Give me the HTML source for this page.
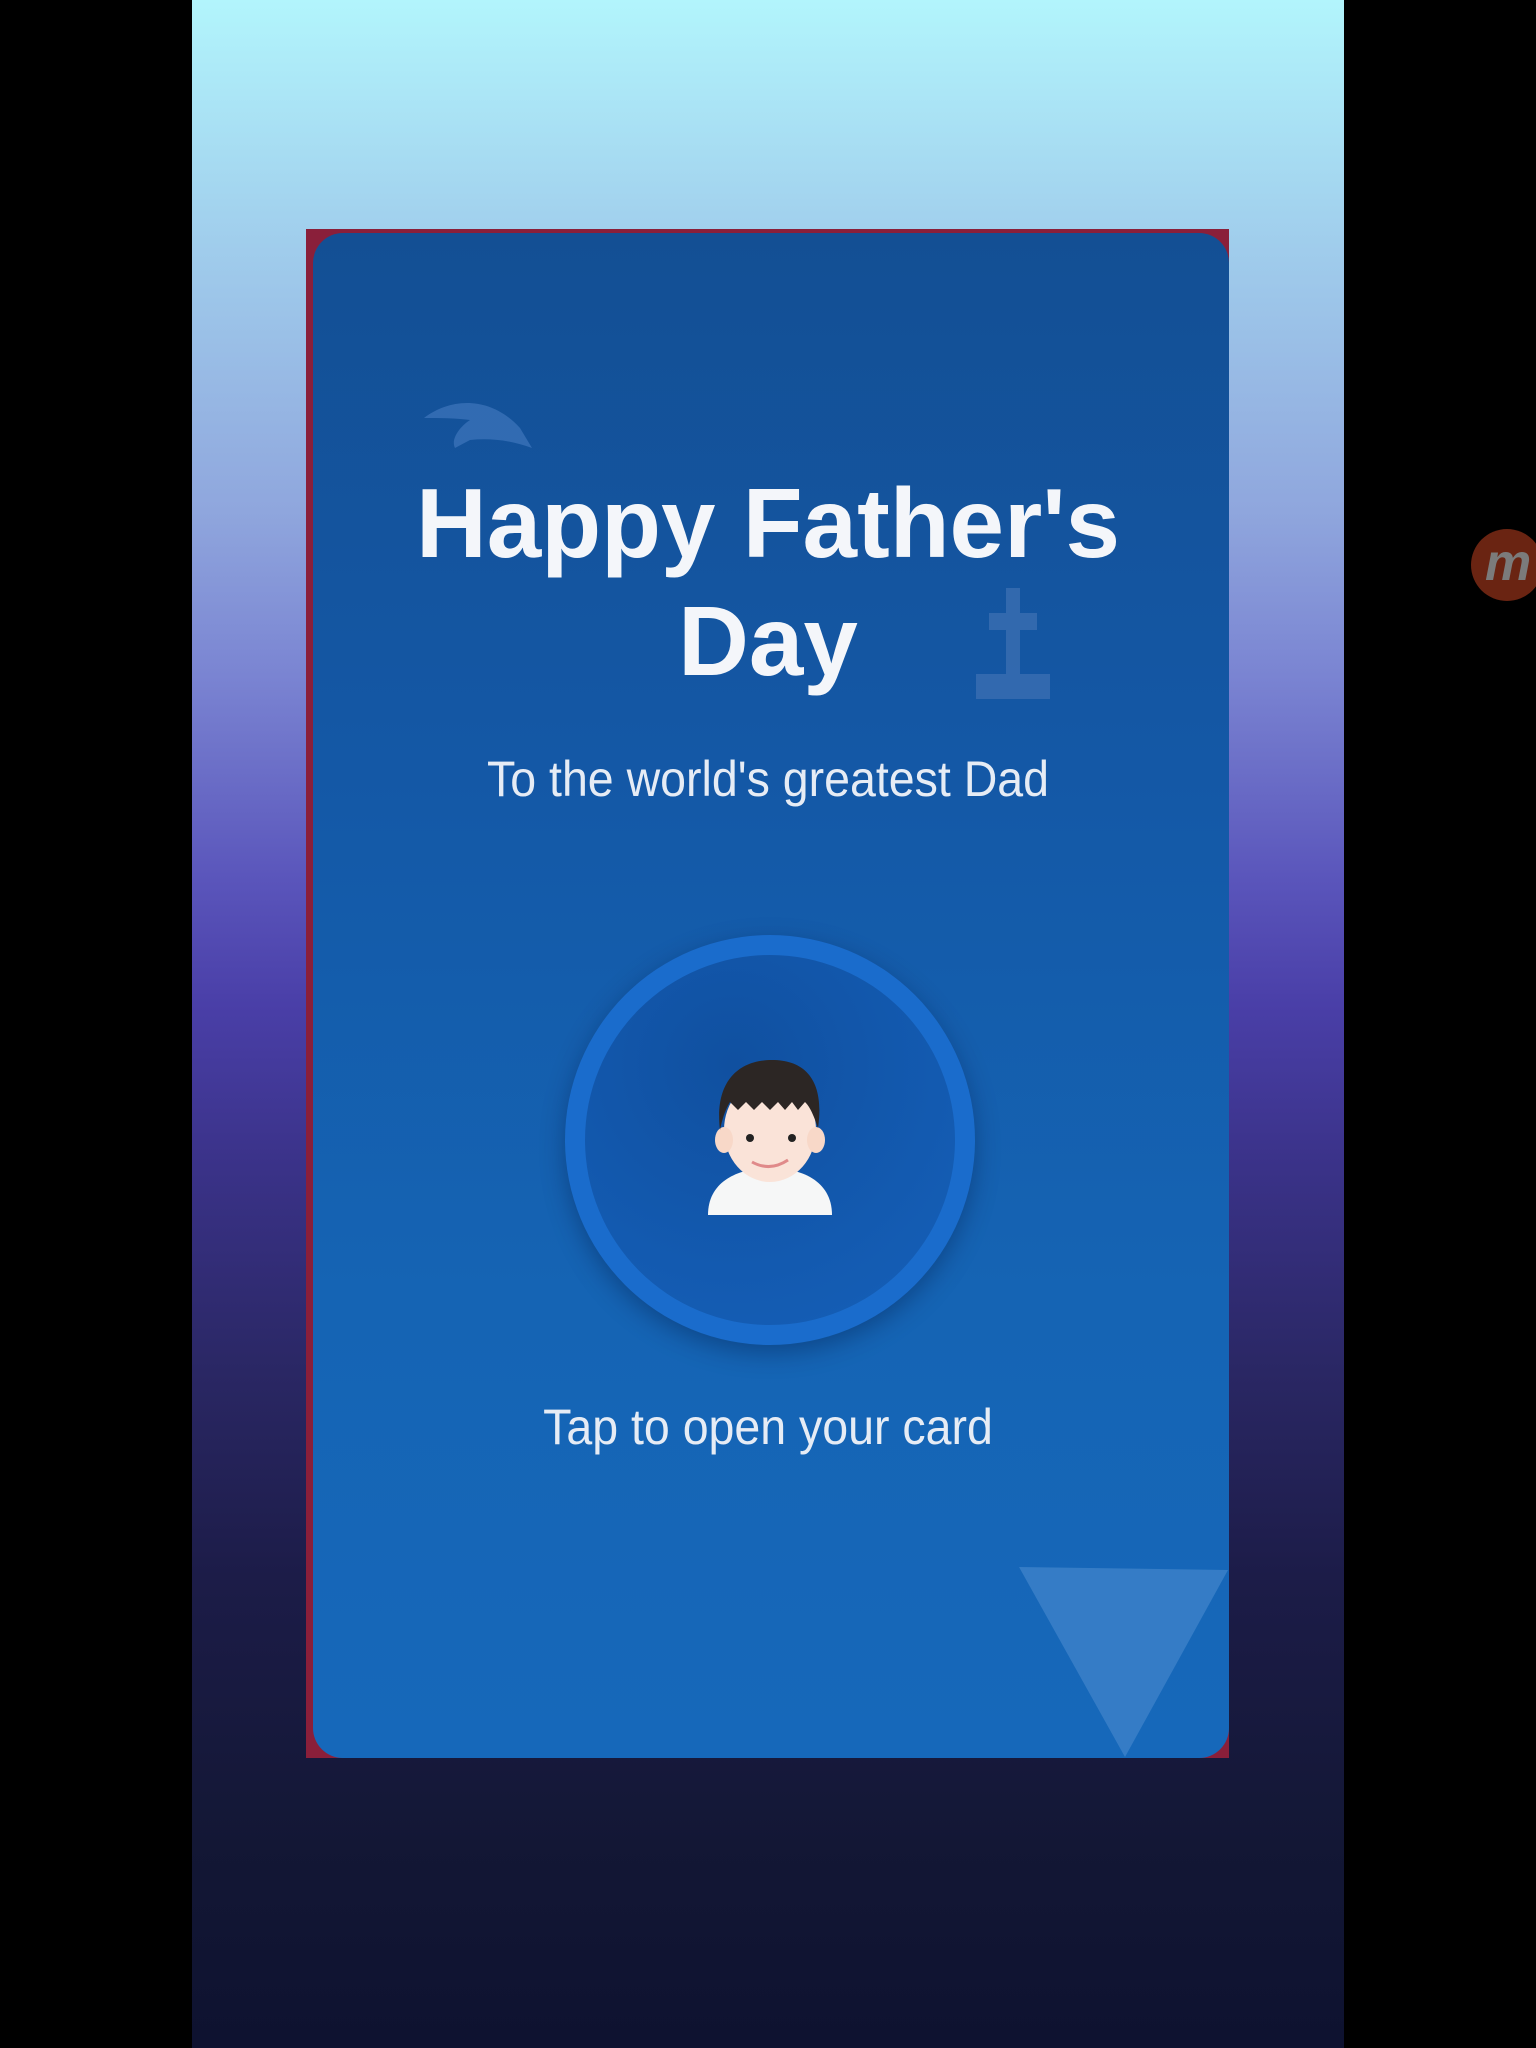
<!DOCTYPE html>
<html><head><meta charset="utf-8"><style>
html,body{margin:0;padding:0;width:1536px;height:2048px;background:#000;overflow:hidden;position:relative;font-family:"Liberation Sans",sans-serif}
#bg{position:absolute;left:192px;top:0;width:1152px;height:2048px;background:linear-gradient(180deg,#b2f5fc 0%,#a0cdec 12%,#8fa6dd 25%,#7a84d2 33%,#5a55bb 43%,#4a3fa8 49%,#3a3288 57%,#2a2764 67%,#1c1c48 77%,#131735 90%,#0e1230 100%)}
#card{position:absolute;left:306px;top:229px;width:923px;height:1529px;background:#8a1f3a;overflow:hidden}
#inner{position:absolute;left:7px;top:4px;right:0;bottom:0;border-radius:30px;background:linear-gradient(180deg,#134f94 0%,#1458a6 35%,#1564b4 70%,#1668ba 100%)}
.t{position:absolute;left:0;width:100%;text-align:center;color:#fff}
#title{top:464px;font-weight:bold;font-size:98px;line-height:118px;color:#f4f6fa}
#sub{top:750px;font-size:50px;color:#e6ecf5;transform:scaleX(.93)}
#tap{top:1398px;font-size:50px;color:#e6ecf5;transform:scaleX(.93)}
#circ{position:absolute;left:565px;top:935px;width:410px;height:410px;border-radius:50%;background:#1a6ccc;box-shadow:0 8px 24px rgba(0,20,60,.35)}
#circ2{position:absolute;left:20px;top:20px;width:370px;height:370px;border-radius:50%;background:radial-gradient(circle at 40% 30%,#1050a0,#135ab0 60%,#1660b8)}
#logo{position:absolute;left:1471px;top:529px;width:72px;height:72px;border-radius:50%;background:#6a2412;color:#7b7b7b;font-weight:bold;font-style:italic;font-size:52px;line-height:68px;text-indent:14px}
</style></head><body>
<div id="bg"></div>
<div id="card"><div id="inner"></div></div>
<svg style="position:absolute;left:0;top:0" width="1536" height="2048">
<path d="M424 418 C450 398 490 395 520 428 L532 448 C510 440 490 438 470 440 L455 448 C450 438 462 425 470 420 C455 418 440 418 424 418Z" fill="#3a72b8" opacity=".8"/>
<g fill="#3a6eb2" opacity=".8"><rect x="1006" y="588" width="14" height="100"/><rect x="989" y="613" width="48" height="17"/><rect x="976" y="674" width="74" height="25"/></g>
<polygon points="1019,1567 1228,1570 1125,1757" fill="#3b80c8" opacity=".85"/>
</svg>
<div class="t" id="title">Happy Father's<br>Day</div>
<div class="t" id="sub">To the world's greatest Dad</div>
<div id="circ"><div id="circ2"></div></div>
<svg style="position:absolute;left:700px;top:1050px" width="140" height="170" viewBox="0 0 140 170">
<path d="M8 165 C8 130 40 118 70 118 C100 118 132 130 132 165 Z" fill="#f6f7f7"/>
<ellipse cx="70" cy="80" rx="46" ry="52" fill="#fae3d8"/>
<ellipse cx="24" cy="90" rx="9" ry="13" fill="#f8d8c8"/><ellipse cx="116" cy="90" rx="9" ry="13" fill="#f8d8c8"/>
<path d="M20 80 C14 30 40 10 72 10 C105 10 125 30 118 78 C112 60 108 55 105 52 L98 60 L92 52 L85 60 L78 52 L70 60 L62 52 L54 60 L46 52 L38 60 L30 52 C25 60 22 70 20 80Z" fill="#2c2624"/>
<circle cx="50" cy="88" r="4" fill="#222"/><circle cx="92" cy="88" r="4" fill="#222"/>
<path d="M52 112 Q70 122 88 110" stroke="#e08a8a" stroke-width="3" fill="none"/>
</svg>
<div class="t" id="tap">Tap to open your card</div>
<div id="logo">m</div>
</body></html>
